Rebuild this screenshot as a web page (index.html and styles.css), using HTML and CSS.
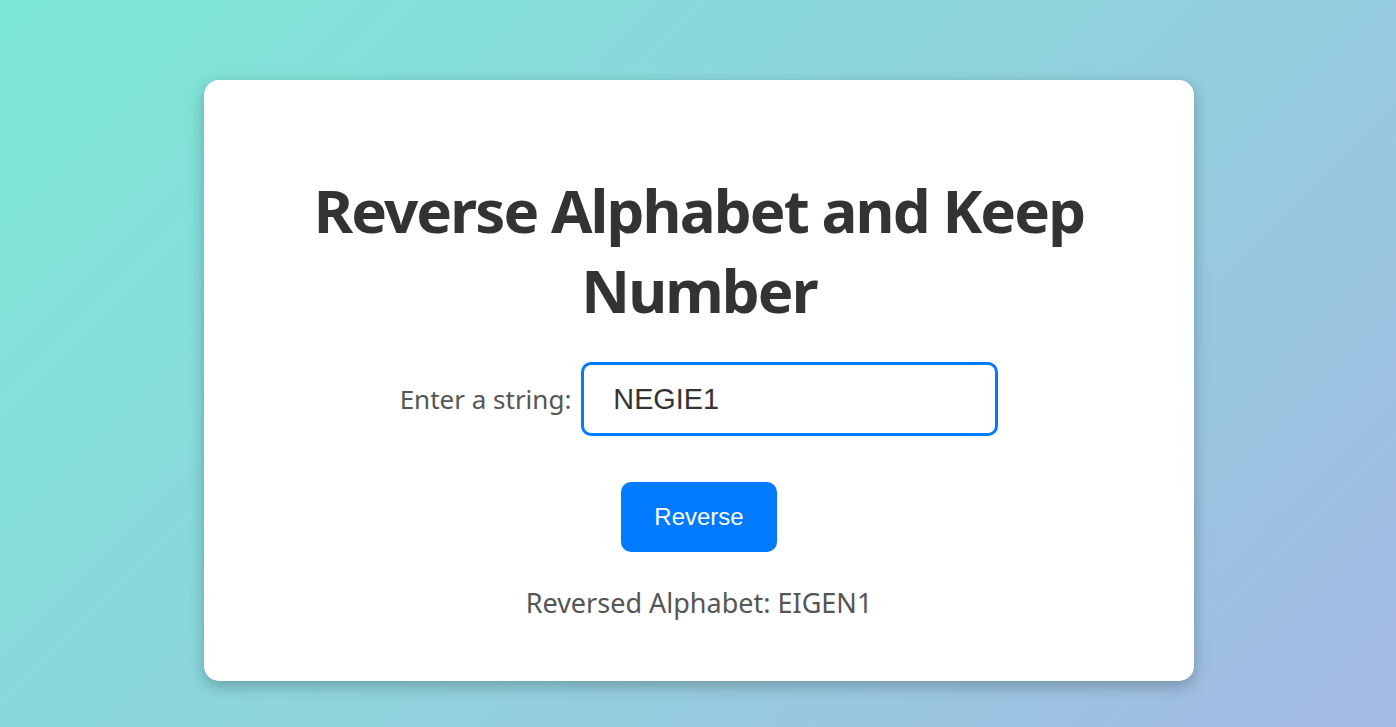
FILE: index.html
```html
<!DOCTYPE html>
<html lang="en">
<head>
<meta charset="utf-8">
<title>Reverse Alphabet and Keep Number</title>
<link rel="stylesheet" href="styles.css">
</head>
<body>
<main class="page">
  <section class="card">
    <h1 class="title">Reverse Alphabet and Keep Number</h1>
    <div class="form-row">
      <label class="label" for="str">Enter a string:</label>
      <input class="input" id="str" type="text" value="NEGIE1">
    </div>
    <button class="btn" type="button">Reverse</button>
    <p class="result">Reversed Alphabet: EIGEN1</p>
  </section>
</main>
</body>
</html>
```

FILE: styles.css
```css
html, body {
  margin: 0;
  height: 100%;
}
body {
  background: linear-gradient(135deg, #7ce7d6 0%, #8fd3dc 50%, #a4b9e4 100%);
  font-family: "Noto Sans", "Open Sans", sans-serif;
  overflow: hidden;
}
.page {
  display: flex;
  justify-content: center;
  padding: 80px 0 0 2px;
}
.card {
  width: 990px;
  box-sizing: border-box;
  background: #fff;
  border-radius: 15px;
  box-shadow: 0 5px 15px rgba(0, 0, 0, 0.25);
  padding: 40px 40px 60px;
  display: flex;
  flex-direction: column;
  align-items: center;
  text-align: center;
}
.title {
  margin: 50px 0 32px;
  font-size: 60px;
  line-height: 80px;
  font-weight: 700;
  letter-spacing: -1.9px;
  color: #333;
}
.form-row {
  display: flex;
  align-items: center;
  gap: 10px;
}
.label {
  font-size: 26px;
  color: #555;
}
.input {
  box-sizing: border-box;
  width: 417px;
  height: 74px;
  border: 3px solid #007bff;
  border-radius: 10px;
  padding: 0 29px;
  font-family: "Liberation Sans", Arial, sans-serif;
  font-size: 28.8px;
  color: #333;
  outline: none;
}
.btn {
  margin-top: 46px;
  width: 156px;
  height: 70px;
  border: none;
  border-radius: 10px;
  background: #007bff;
  color: #fff;
  font-family: "Liberation Sans", Arial, sans-serif;
  font-size: 24px;
  cursor: pointer;
}
.result {
  margin: 33px 0 0;
  font-size: 27px;
  line-height: 36px;
  color: #555;
}
```
